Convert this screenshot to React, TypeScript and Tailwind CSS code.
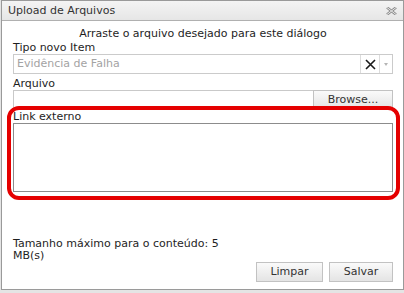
import React from 'react';

const CloseIcon: React.FC = () => (
  <svg width="11" height="8" viewBox="0 0 11 8" className="block">
    <path d="M1 0.5 L10 7.5 M10 0.5 L1 7.5" stroke="#8c8c8c" strokeWidth="2.6" fill="none" />
    <path d="M1 0.5 L10 7.5 M10 0.5 L1 7.5" stroke="#f0f0f0" strokeWidth="0.9" fill="none" />
  </svg>
);

const ClearIcon: React.FC = () => (
  <svg width="11" height="11" viewBox="0 0 11 11" className="block">
    <path d="M1 1 L10 10 M10 1 L1 10" stroke="#1a1a1a" strokeWidth="1.6" fill="none" />
  </svg>
);

const GrayButton: React.FC<{ label: string; className?: string }> = ({ label, className = '' }) => (
  <button
    type="button"
    className={`h-[20px] border border-[#c2c2c2] bg-gradient-to-b from-[#fafafa] to-[#e4e4e4] text-[#333] leading-[18px] text-center ${className}`}
  >
    {label}
  </button>
);

export default function App() {
  return (
    <div className="w-[404px] h-[293px] bg-[#e4e4e4] font-['DejaVu_Sans',sans-serif] text-[11px] leading-[12px] text-[#1e1e1e]">
      <div className="ml-px w-[403px] h-[290px] border border-[#9a9a9a] bg-white flex flex-col">
        {/* Title bar */}
        <div className="h-[20px] border-b border-[#b0b0b0] bg-gradient-to-b from-[#f4f4f4] to-[#e6e6e6] flex items-center justify-between pl-[6px] pr-[6px] text-[#333]">
          <span>Upload de Arquivos</span>
          <CloseIcon />
        </div>

        {/* Body */}
        <div className="flex-1 flex flex-col pl-[11px] pr-[10px] pt-[7px] pb-[7px]">
          <p className="text-center">Arraste o arquivo desejado para este diálogo</p>

          <div className="mt-[2px]">Tipo novo Item</div>
          <div className="h-[20px] border border-[#cbcbcb] flex">
            <div className="flex-1 pl-[3px] flex items-center text-[#a3a3a3]">Evidência de Falha</div>
            <div className="w-[19px] border-l border-[#dcdcdc] flex items-center justify-center">
              <ClearIcon />
            </div>
            <div className="w-[13px] border-l border-[#dcdcdc] flex items-center justify-center">
              <svg width="4" height="3" viewBox="0 0 4 3" className="block">
                <path d="M0 0 L4 0 L2 3 Z" fill="#b5b5b5" />
              </svg>
            </div>
          </div>

          <div className="mt-[4px]">Arquivo</div>
          <div className="h-[20px] flex">
            <div className="flex-1 border border-[#c9c9c9]" />
            <GrayButton label="Browse..." className="w-[80px] -ml-px" />
          </div>

          {/* Highlighted section */}
          <div className="relative -mt-[4px] -ml-[6px] -mr-[7px] border-4 border-[#e50000] rounded-[12px] pl-[2px] pr-[3px] pt-[1px] pb-[4px]">
            <div>Link externo</div>
            <textarea className="block w-full h-[69px] resize-none border border-[#8c8c8c] bg-white outline-none" />
          </div>

          <div className="mt-auto">
            <p>
              Tamanho máximo para o conteúdo: 5
              <br />
              MB(s)
            </p>
            <div className="flex justify-end gap-[6px]">
              <GrayButton label="Limpar" className="w-[67px]" />
              <GrayButton label="Salvar" className="w-[64px]" />
            </div>
          </div>
        </div>
      </div>
    </div>
  );
}
